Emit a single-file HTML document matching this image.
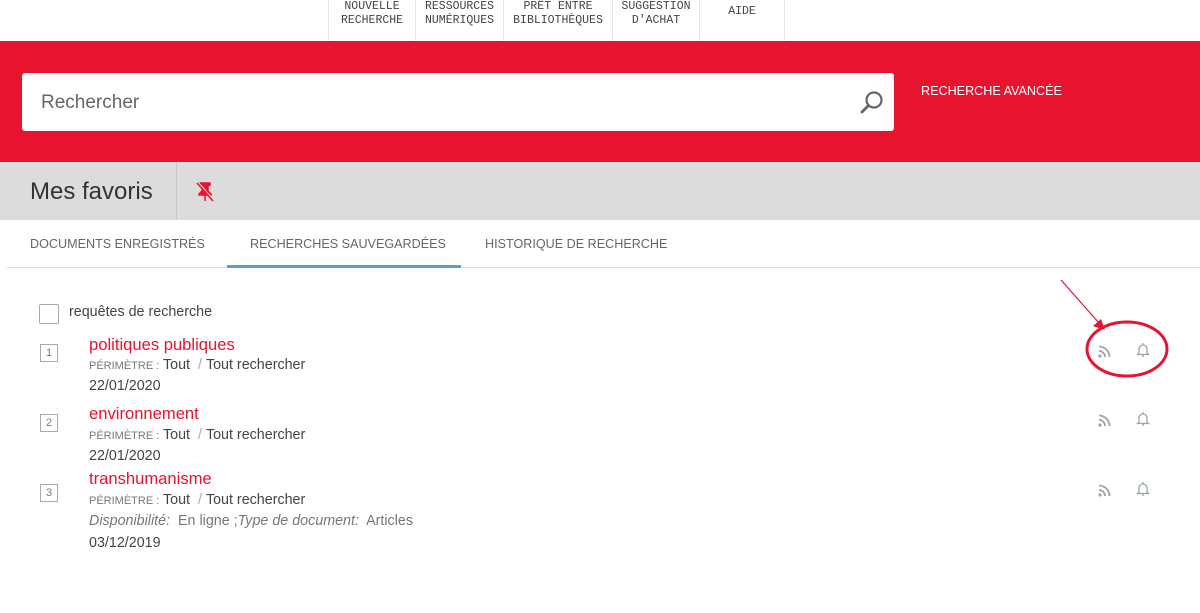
<!DOCTYPE html>
<html><head><meta charset="utf-8"><style>
*{margin:0;padding:0;box-sizing:border-box}
body{width:1200px;height:613px;overflow:hidden;background:#fff;font-family:"Liberation Sans",sans-serif;color:#444;position:relative}
.top{position:absolute;top:0;left:0;width:1200px;height:41px;background:#fff}
.nav{position:absolute;left:328px;top:0;height:41px;display:flex;border-left:1px solid #e5e5e5}
.nav div{border-right:1px solid #e5e5e5;font-family:"Liberation Mono",monospace;font-size:11.5px;line-height:14px;color:#444;text-align:center;display:flex;align-items:center;justify-content:center;padding-bottom:14px}
.red{position:absolute;top:41px;left:0;width:1200px;height:121px;background:#e8132f}
.search{position:absolute;left:22px;top:73px;width:872px;height:58px;background:#fff;border-radius:3px}
.search span{position:absolute;left:19px;top:19px;font-size:19px;color:#666}
.adv{position:absolute;left:921px;top:84px;color:#fff;font-size:12.6px}
.fav{position:absolute;top:162px;left:0;width:1200px;height:58px;background:#dcdcdc}
.fav h1{position:absolute;left:30px;top:16px;font-weight:normal;font-size:24px;color:#333}
.fav .sep{position:absolute;left:176px;top:0;width:1px;height:58px;background:#c8c8c8}
.tabs{position:absolute;top:220px;left:7px;width:1193px;height:48px;border-bottom:1px solid #ddd}
.tab{position:absolute;top:17px;font-size:12.6px;color:#666}
.sm{font-size:11px;color:#777}
.t{position:absolute;font-size:14.3px;color:#444}
.ttl{position:absolute;font-size:16.6px;color:#e8132f}
.num{position:absolute;left:40px;width:18px;height:18px;border:1px solid #aaa;font-size:11px;color:#777;text-align:center;line-height:16px}
svg.ic{position:absolute}
</style></head><body>
<div class="top"><div class="nav">
<div style="width:87px">NOUVELLE<br>RECHERCHE</div>
<div style="width:88px">RESSOURCES<br>NUMÉRIQUES</div>
<div style="width:109px">PRÊT ENTRE<br>BIBLIOTHÈQUES</div>
<div style="width:87px">SUGGESTION<br>D'ACHAT</div>
<div style="width:85px;padding-bottom:18px">AIDE</div>
</div></div>
<div class="red"></div>
<div class="search"><span>Rechercher</span>
<svg style="position:absolute;left:837px;top:17px" width="26" height="26" viewBox="0 0 26 26"><circle cx="15" cy="10" r="7.5" fill="none" stroke="#666" stroke-width="2.2"/><line x1="9.5" y1="15.5" x2="3" y2="22" stroke="#666" stroke-width="2.8" stroke-linecap="round"/></svg></div>
<div class="adv">RECHERCHE AVANCÉE</div>
<div class="fav"><h1>Mes favoris</h1><div class="sep"></div>
<svg style="position:absolute;left:196px;top:20px" width="18" height="20" viewBox="0 0 18 20"><path d="M4 1h10v2l-2 1v5l3 3v1H3v-1l3-3V4L4 3z M9 13v6" fill="#e8132f" stroke="#e8132f" stroke-width="1.5"/><line x1="1" y1="1" x2="17" y2="19" stroke="#e8132f" stroke-width="1.5"/><line x1="2" y1="0" x2="18" y2="18" stroke="#dcdcdc" stroke-width="1"/></svg>
</div>
<div class="tabs">
<div class="tab" style="left:23px">DOCUMENTS ENREGISTRÉS</div>
<div class="tab" style="left:243px">RECHERCHES SAUVEGARDÉES</div>
<div style="position:absolute;left:220px;top:45px;width:234px;height:3px;background:#55a3b4"></div>
<div class="tab" style="left:478px">HISTORIQUE DE RECHERCHE</div>
</div>
<div style="position:absolute;left:39px;top:304px;width:20px;height:20px;border:1px solid #aaa;border-radius:2px"></div>
<div class="t" style="left:69px;top:304px">requêtes de recherche</div>

<div class="num" style="top:344px">1</div>
<div class="ttl" style="left:89px;top:335px">politiques publiques</div>
<div class="t" style="left:89px;top:357px"><span class="sm">PÉRIMÈTRE :</span> Tout <span style="color:#aaa">&nbsp;/&nbsp;</span>Tout rechercher</div>
<div class="t" style="left:89px;top:378px">22/01/2020</div>

<div class="num" style="top:414px">2</div>
<div class="ttl" style="left:89px;top:404px">environnement</div>
<div class="t" style="left:89px;top:427px"><span class="sm">PÉRIMÈTRE :</span> Tout <span style="color:#aaa">&nbsp;/&nbsp;</span>Tout rechercher</div>
<div class="t" style="left:89px;top:448px">22/01/2020</div>

<div class="num" style="top:484px">3</div>
<div class="ttl" style="left:89px;top:469px">transhumanisme</div>
<div class="t" style="left:89px;top:492px"><span class="sm">PÉRIMÈTRE :</span> Tout <span style="color:#aaa">&nbsp;/&nbsp;</span>Tout rechercher</div>
<div class="t" style="left:89px;top:513px;color:#777"><i>Disponibilité:</i>&nbsp; En ligne ;<i>Type de document:</i>&nbsp; Articles</div>
<div class="t" style="left:89px;top:535px">03/12/2019</div>

<svg width="0" height="0" style="position:absolute"><defs>
<g id="rss"><circle cx="2" cy="12" r="1.6" fill="#9aa4ad"/><path d="M1 7a6 6 0 0 1 6 6M1 2.5a10.5 10.5 0 0 1 10.5 10.5" fill="none" stroke="#9aa4ad" stroke-width="1.8"/></g>
<g id="bell"><path d="M3 11V7a4 4 0 0 1 8 0v4l1.5 1.5h-11z M6 14h2 M7 1v2" fill="none" stroke="#9aa4ad" stroke-width="1.3"/></g>
</defs></svg>
<svg class="ic" style="left:1098px;top:344px" width="14" height="15"><use href="#rss"/></svg>
<svg class="ic" style="left:1136px;top:342px" width="14" height="16"><use href="#bell"/></svg>
<svg class="ic" style="left:1098px;top:413px" width="14" height="15"><use href="#rss"/></svg>
<svg class="ic" style="left:1136px;top:411px" width="14" height="16"><use href="#bell"/></svg>
<svg class="ic" style="left:1098px;top:483px" width="14" height="15"><use href="#rss"/></svg>
<svg class="ic" style="left:1136px;top:481px" width="14" height="16"><use href="#bell"/></svg>

<svg class="ic" style="left:1055px;top:275px" width="120" height="110">
<line x1="6" y1="5" x2="44" y2="48" stroke="#e8132f" stroke-width="1.2"/>
<path d="M50 55l-12-4 8-7z" fill="#e8132f"/>
<ellipse cx="72" cy="74" rx="40" ry="27" fill="none" stroke="#e8132f" stroke-width="3"/>
</svg>
</body></html>
